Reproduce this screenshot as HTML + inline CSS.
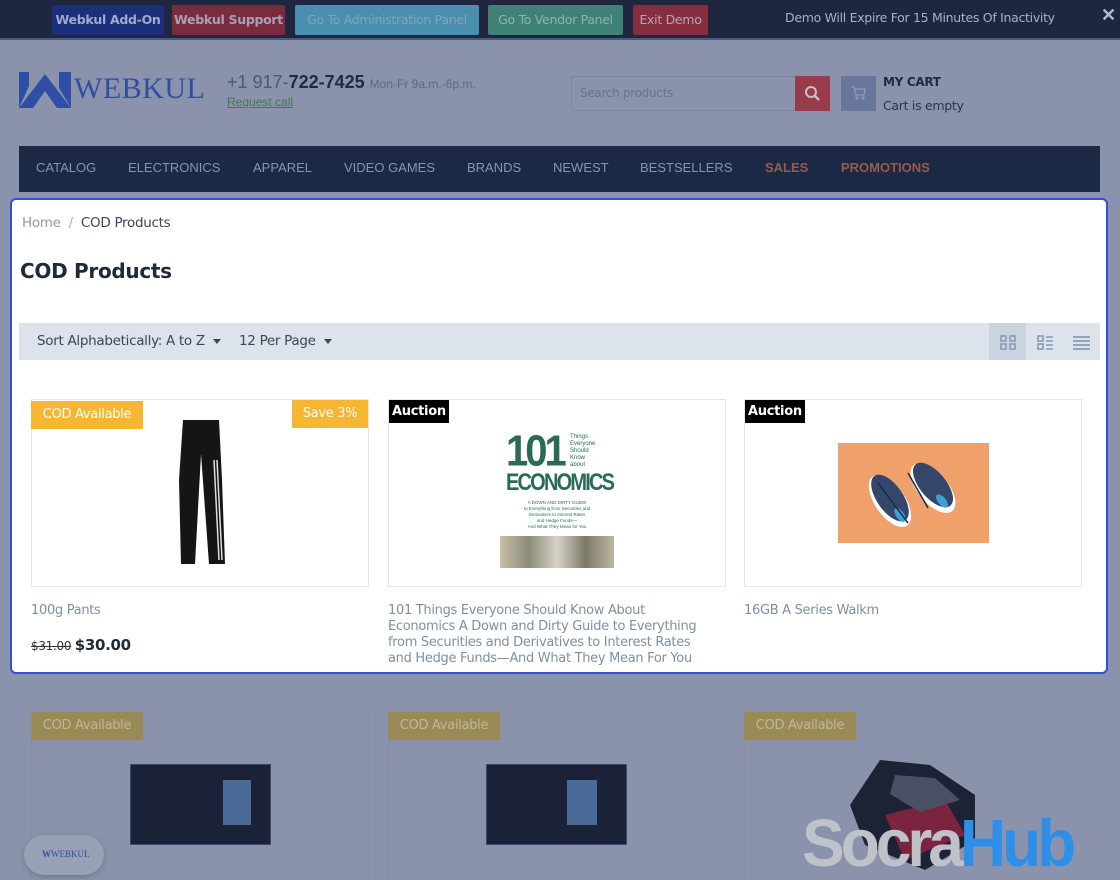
<!DOCTYPE html>
<html><head><meta charset="utf-8"><style>
*{margin:0;padding:0;box-sizing:border-box}
html,body{width:1120px;height:880px;overflow:hidden}
body{background:#8a93ab;font-family:"Liberation Sans",sans-serif;position:relative}
.a{position:absolute}
.os{font-family:"DejaVu Sans","Liberation Sans",sans-serif;letter-spacing:-0.3px}
.btn{position:absolute;top:5px;height:30px;border-radius:2px;font-size:12.5px;line-height:30px;text-align:center;color:#9aa3bd;white-space:nowrap;overflow:hidden}
.nav span{position:absolute;top:0;line-height:44px;font-size:13px;color:#8892ad}
.card{position:absolute;border:1px solid #e6e6e6;background:#fff}
.dcard{position:absolute;border:1px solid #8590a8;}
.badge{position:absolute;font-size:13px;color:#fff;height:28px;line-height:28px;padding:0 8px;white-space:nowrap}
.auc{position:absolute;background:#000;color:#fff;font-weight:bold;font-size:13px;padding:0 3px;height:23px;line-height:23px;top:0;left:0}
.ptitle{position:absolute;font-size:13px;color:#7f8fa3;line-height:16px}
.caret{display:inline-block;width:0;height:0;border-left:4px solid transparent;border-right:4px solid transparent;border-top:5px solid #3b4658;vertical-align:middle;margin-left:8px}
</style></head><body>
<div class="a" style="left:0;top:0;width:1120px;height:40px;background:#1e2640;border-bottom:2px solid #4a5a7a"></div>
<div class="btn os" style="left:52px;width:112px;background:#1b2f7b;color:#a0abcc;font-weight:bold">Webkul Add-On</div>
<div class="btn os" style="left:172px;width:113px;background:#7a2b3e;color:#a8a0b8;font-weight:bold">Webkul Support</div>
<div class="btn os" style="left:295px;width:184px;background:#4b8fb0;color:#7fa4be">Go To Administration Panel</div>
<div class="btn os" style="left:488px;width:135px;background:#3f8275;color:#8fb0b3">Go To Vendor Panel</div>
<div class="btn os" style="left:633px;width:75px;background:#862e40;color:#b5a4b6">Exit Demo</div>
<div class="a os" style="left:785px;top:10px;font-size:12.5px;color:#a9b0c8;white-space:nowrap">Demo Will Expire For 15 Minutes Of Inactivity</div>
<div class="a" style="left:1101px;top:5px;font-size:18px;font-weight:bold;color:#b5bbcf">✕</div>

<svg class="a" style="left:19px;top:72px" width="52" height="36" viewBox="0 0 52 36"><path d="M0 0h10v14L0 36z" fill="#2f4ea5"/><path d="M0 36L26 2 52 36H38L26 19 14 36z" fill="#2f4ea5"/><path d="M40 0h12v36L40 16z" fill="#2f4ea5"/></svg>
<div class="a" style="left:74px;top:72px;font-family:'Liberation Serif',serif;font-size:30px;color:#2f4ea5;letter-spacing:0.5px">WEBKUL</div>
<div class="a" style="left:227px;top:72px;font-size:18px;color:#4a5878;white-space:nowrap">+1 917-<b style="color:#1f2a44">722-7425</b> <span style="font-size:12px;color:#5d6884">Mon-Fr 9a.m.-6p.m.</span></div>
<div class="a" style="left:227px;top:95px;font-size:12px;color:#3f7a4d;text-decoration:underline">Request call</div>
<div class="a" style="left:571px;top:76px;width:225px;height:35px;border:1px solid #7c86a0;background:#8a93ab"></div>
<div class="a os" style="left:580px;top:86px;font-size:12px;color:#6a748e">Search products</div>
<div class="a" style="left:795px;top:76px;width:35px;height:35px;background:#9a3b4b"></div>
<svg class="a" style="left:804px;top:85px" width="17" height="17"><circle cx="7" cy="7" r="5" stroke="#c5c0cc" stroke-width="2" fill="none"/><path d="M11 11l4 4" stroke="#c5c0cc" stroke-width="2.5"/></svg>
<div class="a" style="left:841px;top:76px;width:35px;height:35px;background:#67769a"></div>
<svg class="a" style="left:851px;top:86px" width="15" height="14" fill="none" stroke="#8f9ab5" stroke-width="1.3"><path d="M0 1h3l2 8h8l1-6H4"/><circle cx="6" cy="12" r="1"/><circle cx="12" cy="12" r="1"/></svg>
<div class="a os" style="left:883px;top:75px;font-size:12px;font-weight:bold;color:#1f2a44">MY CART</div>
<div class="a os" style="left:883px;top:98px;font-size:12.5px;color:#2a3452">Cart is empty</div>

<div class="a nav" style="left:19px;top:146px;width:1081px;height:46px;background:#1c2945">
<span style="left:17px">CATALOG</span><span style="left:109px">ELECTRONICS</span><span style="left:234px">APPAREL</span><span style="left:325px">VIDEO GAMES</span><span style="left:448px">BRANDS</span><span style="left:534px">NEWEST</span><span style="left:621px">BESTSELLERS</span><span style="left:746px;color:#9a5a4a;font-weight:bold">SALES</span><span style="left:822px;color:#9a5a4a;font-weight:bold">PROMOTIONS</span>
</div>

<div class="a" style="left:10px;top:198px;width:1098px;height:476px;background:#fff;border:2px solid #2f4fdb;border-radius:6px"></div>
<div class="a os" style="left:22px;top:215px;font-size:13.5px;color:#8a9aae">Home <span style="color:#aab">&nbsp;/&nbsp;</span> <span style="color:#3b4658">COD Products</span></div>
<div class="a os" style="left:20px;top:259px;font-size:20px;font-weight:bold;color:#1f2a38">COD Products</div>
<div class="a" style="left:19px;top:323px;width:1081px;height:37px;background:#dce3ea"></div>
<div class="a os" style="left:37px;top:333px;font-size:13.5px;color:#3b4658">Sort Alphabetically: A to Z<span class="caret"></span></div>
<div class="a os" style="left:239px;top:333px;font-size:13.5px;color:#3b4658">12 Per Page<span class="caret"></span></div>
<div class="a" style="left:989px;top:323px;width:37px;height:37px;background:#cbd4de"></div>
<svg class="a" style="left:1000px;top:335px" width="16" height="15" fill="none" stroke="#8a9bb3" stroke-width="1.6"><rect x="1" y="1" width="5" height="5"/><rect x="10" y="1" width="5" height="5"/><rect x="1" y="9" width="5" height="5"/><rect x="10" y="9" width="5" height="5"/></svg>
<svg class="a" style="left:1037px;top:335px" width="16" height="15" fill="none" stroke="#8a9bb3" stroke-width="1.6"><rect x="1" y="1" width="5" height="5"/><rect x="1" y="9" width="5" height="5"/><path d="M9 2h7M9 6h7M9 10h7M9 14h7"/></svg>
<svg class="a" style="left:1073px;top:335px" width="17" height="15" stroke="#8a9bb3" stroke-width="1.8"><path d="M0 2h17M0 6h17M0 10h17M0 14h17"/></svg>

<div class="card" style="left:31px;top:399px;width:338px;height:188px">
 <svg class="a" style="left:147px;top:20px" width="46" height="146"><path d="M4 0h36l3 60 3 84h-16l-8-110-6 110H2L0 60z" fill="#151515"/><path d="M38 40l5 100M35 40l5 100" stroke="#ddd" stroke-width="1.5"/></svg>
</div>
<div class="badge os" style="left:31px;top:401px;width:112px;text-align:center;padding:0;background:#f6b631">COD Available</div>
<div class="badge os" style="left:292px;top:400px;width:76px;text-align:center;padding:0;background:#f6b631">Save 3%</div>

<div class="card" style="left:388px;top:399px;width:338px;height:188px">
 <div class="auc os">Auction</div>
 <div class="a" style="left:111px;top:30px;width:114px;height:138px;background:#fff">
  <div class="a" style="left:6px;top:0;font-weight:bold;font-size:40px;color:#2a6b55;line-height:42px;letter-spacing:-3px;transform:scaleY(1.1)">101</div>
  <div class="a" style="left:70px;top:4px;font-size:6px;color:#2a6b55;line-height:7px">Things<br>Everyone<br>Should<br>Know<br>about</div>
  <div class="a" style="left:6px;top:42px;font-weight:bold;font-size:20px;color:#2a6b55;letter-spacing:-1.8px;transform:scaleY(1.2)">ECONOMICS</div>
  <div class="a" style="left:4px;top:70px;width:106px;font-size:4.5px;color:#2a6b55;text-align:center;line-height:6px">A DOWN AND DIRTY GUIDE<br>to Everything from Securities and<br>Derivatives to Interest Rates<br>and Hedge Funds—<br>And What They Mean for You</div>
  <div class="a" style="left:0;top:106px;width:114px;height:32px;background:linear-gradient(90deg,#c8c0a8,#8c8b78,#d7d3c6,#7e7a68,#bcb7a5)"></div>
 </div>
</div>
<div class="card" style="left:744px;top:399px;width:338px;height:188px">
 <div class="auc os">Auction</div>
 <div class="a" style="left:93px;top:43px;width:151px;height:100px;background:#f0a06a">
  <svg width="151" height="100"><ellipse cx="52" cy="58" rx="15" ry="30" transform="rotate(-35 52 58)" fill="#fff"/><ellipse cx="52" cy="55" rx="13" ry="27" transform="rotate(-35 52 55)" fill="#34466a"/><ellipse cx="95" cy="45" rx="15" ry="30" transform="rotate(-40 95 45)" fill="#fff"/><ellipse cx="95" cy="42" rx="13" ry="27" transform="rotate(-40 95 42)" fill="#34466a"/><ellipse cx="62" cy="72" rx="4" ry="8" transform="rotate(-35 62 72)" fill="#3fa0d8"/><ellipse cx="104" cy="58" rx="4" ry="8" transform="rotate(-40 104 58)" fill="#3fa0d8"/><path d="M70 30l20 35M40 40l30 40" stroke="#1d2a44" stroke-width="1.5"/></svg>
 </div>
</div>
<div class="ptitle os" style="left:31px;top:603px">100g Pants</div>
<div class="a os" style="left:31px;top:636px;font-size:12px;color:#333"><s>$31.00</s> <b style="font-size:15px;color:#1f2a38">$30.00</b></div>
<div class="ptitle os" style="left:388px;top:603px;width:325px">101 Things Everyone Should Know About Economics A Down and Dirty Guide to Everything from Securities and Derivatives to Interest Rates and Hedge Funds—And What They Mean For You</div>
<div class="ptitle os" style="left:744px;top:603px">16GB A Series Walkm</div>

<div class="dcard" style="left:31px;top:711px;width:338px;height:180px"></div>
<div class="dcard" style="left:388px;top:711px;width:338px;height:180px"></div>
<div class="dcard" style="left:744px;top:711px;width:338px;height:180px"></div>
<div class="badge os" style="left:31px;top:712px;width:112px;text-align:center;padding:0;background:#9a8a55;color:#bdb79a">COD Available</div>
<div class="badge os" style="left:388px;top:712px;width:112px;text-align:center;padding:0;background:#9a8a55;color:#bdb79a">COD Available</div>
<div class="badge os" style="left:744px;top:712px;width:112px;text-align:center;padding:0;background:#9a8a55;color:#bdb79a">COD Available</div>
<div class="a" style="left:130px;top:764px;width:141px;height:81px;background:#1b2238;border:1px solid #3a4a70"><div class="a" style="left:92px;top:15px;width:28px;height:45px;background:#4a6a98"></div></div>
<div class="a" style="left:486px;top:764px;width:141px;height:81px;background:#1b2238;border:1px solid #3a4a70"><div class="a" style="left:80px;top:15px;width:30px;height:45px;background:#4a6a98"></div></div>
<svg class="a" style="left:840px;top:760px" width="140" height="110"><path d="M40 0l50 5 45 30 0 45-50 30-60-25-15-40z" fill="#1e2235"/><path d="M45 55l60-15 20 35-60 25z" fill="#7a2440"/><path d="M55 15l40 3 25 22-40 12-30-18z" fill="#4a5066"/></svg>
<div class="a" style="left:802px;top:808px;font-size:64px;font-weight:bold;letter-spacing:-4px;line-height:70px;color:#bfc2c9;transform:scaleY(1.05)">Socra<span style="color:#2e8fe8">Hub</span></div>
<div class="a" style="left:24px;top:835px;width:80px;height:40px;border-radius:20px;background:#98a0b6;box-shadow:0 2px 6px rgba(0,0,0,.2)"></div>
<div class="a" style="left:42px;top:849px;font-family:'Liberation Serif',serif;font-size:9px;color:#2f4ea5"><b>W</b>WEBKUL</div>
</body></html>
